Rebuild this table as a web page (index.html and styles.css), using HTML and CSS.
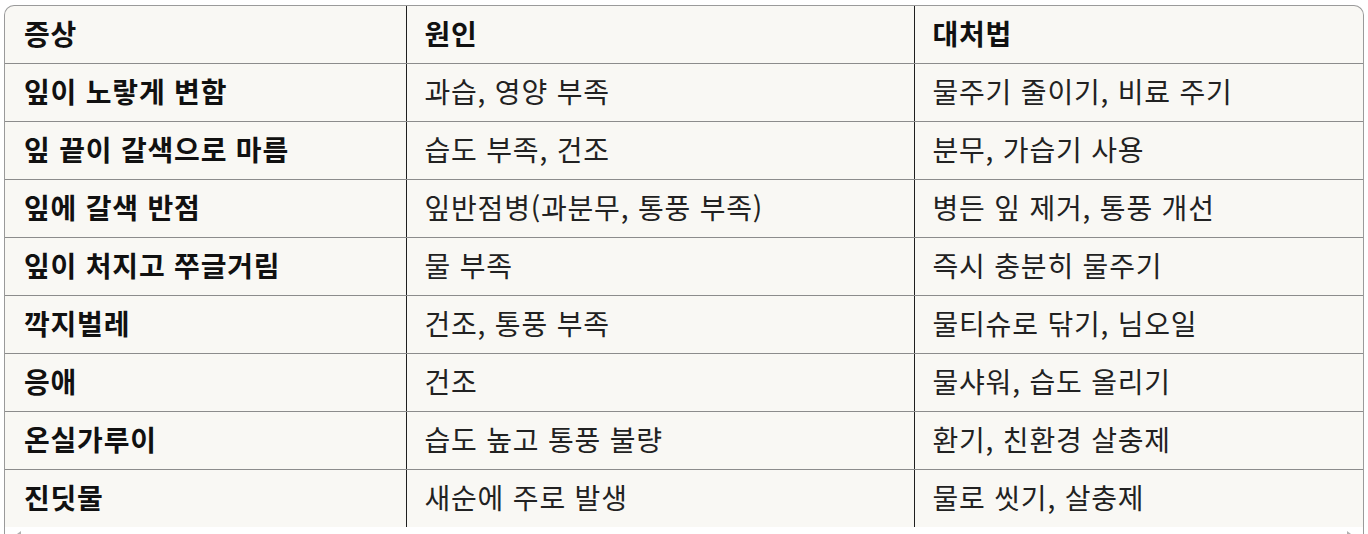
FILE: index.html
```html
<!DOCTYPE html>
<html lang="ko">
<head>
<meta charset="utf-8">
<link rel="stylesheet" href="styles.css">
</head>
<body>
<div class="wrap">
  <table class="tbl">
    <colgroup><col class="c1"><col class="c2"><col class="c3"></colgroup>
    <thead>
      <tr><th>증상</th><th>원인</th><th>대처법</th></tr>
    </thead>
    <tbody>
      <tr><td class="b">잎이 노랗게 변함</td><td>과습, 영양 부족</td><td>물주기 줄이기, 비료 주기</td></tr>
      <tr><td class="b">잎 끝이 갈색으로 마름</td><td>습도 부족, 건조</td><td>분무, 가습기 사용</td></tr>
      <tr><td class="b">잎에 갈색 반점</td><td>잎반점병(과분무, 통풍 부족)</td><td>병든 잎 제거, 통풍 개선</td></tr>
      <tr><td class="b">잎이 처지고 쭈글거림</td><td>물 부족</td><td>즉시 충분히 물주기</td></tr>
      <tr><td class="b">깍지벌레</td><td>건조, 통풍 부족</td><td>물티슈로 닦기, 님오일</td></tr>
      <tr><td class="b">응애</td><td>건조</td><td>물샤워, 습도 올리기</td></tr>
      <tr><td class="b">온실가루이</td><td>습도 높고 통풍 불량</td><td>환기, 친환경 살충제</td></tr>
      <tr><td class="b">진딧물</td><td>새순에 주로 발생</td><td>물로 씻기, 살충제</td></tr>
    </tbody>
  </table>
  <div class="scroll"><span class="arr l"></span><span class="arr r"></span></div>
</div>
</body>
</html>
```
FILE: styles.css
```css
html, body { margin: 0; background: #fff; }
body { font-family: "Noto Sans CJK KR", "Noto Sans", sans-serif; color: #1a1a1a; }
.wrap {
  margin: 5px 4px 0 4px;
  border: 1px solid #9a9a9a;
  border-bottom: none;
  border-radius: 10px 10px 0 0;
  background: #f9f8f4;
  overflow: hidden;
  height: 560px;
}
.tbl { border-collapse: collapse; width: 100%; table-layout: fixed; }
.c1 { width: 401px; }
.c2 { width: 508px; }
.c3 { width: auto; }
.tbl th, .tbl td {
  height: 53px;
  padding: 0 18px 4px 18px;
  text-align: left;
  vertical-align: middle;
  font-size: 28px;
  letter-spacing: 0.8px;
  line-height: 1;
  border-bottom: 1px solid #8c8c8c;
  border-left: 1px solid #1f1f1f;
}
.tbl th:first-child, .tbl td:first-child { border-left: none; padding-left: 19px; }
.tbl th, .tbl td.b { font-weight: 700; color: #111; }
.tbl td { font-weight: 400; color: #222; }
.tbl tbody tr:last-child td { border-bottom: none; }
.scroll { position: relative; height: 40px; background: #fff; }
.arr { position: absolute; top: 4px; width: 0; height: 0; border-top: 3px solid transparent; border-bottom: 3px solid transparent; }
.arr.l { left: 12px; border-right: 4px solid #b0b0b0; }
.arr.r { right: 12px; border-left: 4px solid #b0b0b0; }
```
